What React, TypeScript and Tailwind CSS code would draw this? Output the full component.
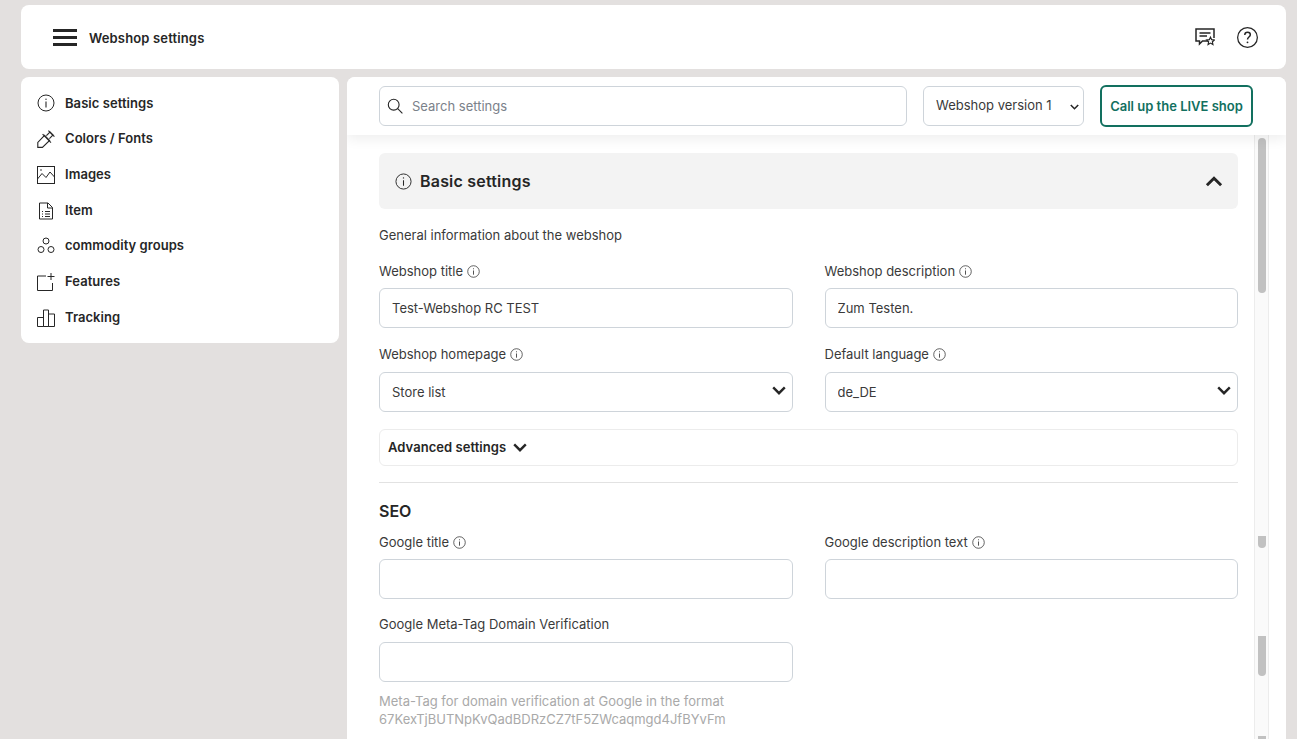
import React from 'react';

const ink = '#262626';

const InfoIcon = ({ className }: { className: string }) => (
  <svg viewBox="0 0 18 18" fill="none" stroke={ink} strokeWidth="1" className={className}>
    <circle cx="9" cy="9" r="8" />
    <path d="M9 7.6V13.4" strokeWidth="1.1" />
    <circle cx="9" cy="5.2" r="0.7" fill={ink} stroke="none" />
  </svg>
);

const PenIcon = () => (
  <svg viewBox="0 0 18 18" fill="none" stroke={ink} strokeWidth="1.1" className="w-[18px] h-[18px]">
    <path d="M7.6 5.4 12.6 10.4 5.4 17.4H0.8V12.4Z" />
    <path d="M5.6 4.2 14 12.6" />
    <path d="M9.4 5.6 13 2l3 3-3.6 3.6" />
    <path d="M11.4 0.6 17.4 6.6" />
  </svg>
);

const ImageIcon = () => (
  <svg viewBox="0 0 18 18" fill="none" stroke={ink} strokeWidth="1" className="w-[18px] h-[18px]">
    <rect x="0.5" y="0.5" width="17" height="17" />
    <path d="M0.5 13 5 7.5l4 4 4-5.5 4.5 5" />
    <circle cx="4" cy="4" r="0.8" fill={ink} stroke="none" />
  </svg>
);

const DocIcon = () => (
  <svg viewBox="0 0 18 18" fill="none" stroke={ink} strokeWidth="1" className="w-[18px] h-[18px]">
    <path d="M2.5 1h8.5l4.5 4.5V17h-13Z" />
    <path d="M10.5 1v5h5" />
    <path d="M8 9.5h5M8 12h5M8 14.5h5" />
    <path d="M5 9.5h1M5 12h1M5 14.5h1" />
  </svg>
);

const GroupsIcon = () => (
  <svg viewBox="0 0 18 18" fill="none" stroke={ink} strokeWidth="1" className="w-[18px] h-[18px]">
    <circle cx="9" cy="4" r="3" />
    <circle cx="4" cy="12.5" r="3" />
    <circle cx="14" cy="12.5" r="3" />
  </svg>
);

const FeatureIcon = () => (
  <svg viewBox="0 0 18 18" fill="none" stroke={ink} strokeWidth="1" className="w-[18px] h-[18px]">
    <path d="M9 3H0.5V17.5H15.5V10" />
    <path d="M14 0V7M10.5 3.5H17.5" />
  </svg>
);

const ChartIcon = () => (
  <svg viewBox="0 0 18 18" fill="none" stroke={ink} strokeWidth="1" className="w-[18px] h-[18px]">
    <path d="M0.5 17.5V8.5H6.5V17.5Z" />
    <path d="M6.5 17.5V1H11.5V17.5Z" />
    <path d="M11.5 17.5V5H17.5V17.5Z" />
  </svg>
);

const ChatStarIcon = () => (
  <svg viewBox="0 0 20 18" fill="none" stroke={ink} className="w-[20px] h-[18px]">
    <path d="M13 13H7.5L4.5 16V13H1V1H19V10" strokeWidth="1.5" />
    <path d="M4.5 5H15.5M4.5 8H12" strokeWidth="1.4" />
    <path d="M15.5 9.2l1.2 2.5 2.6.3-1.9 1.8.5 2.7-2.4-1.4-2.4 1.4.5-2.7-1.9-1.8 2.6-.3Z" strokeWidth="1.2" fill="#fff" />
  </svg>
);

const HelpIcon = () => (
  <svg viewBox="0 0 20 20" fill="none" stroke={ink} strokeWidth="1.2" className="w-[21px] h-[21px]">
    <circle cx="10" cy="10" r="9.4" />
    <path d="M7.4 7.6c0-1.5 1.1-2.6 2.7-2.6s2.6 1 2.6 2.3c0 2.2-2.7 2.3-2.7 4.6" strokeWidth="1.4" />
    <circle cx="10" cy="14.6" r="0.9" fill={ink} stroke="none" />
  </svg>
);

const SearchIcon = () => (
  <svg viewBox="0 0 16 16" fill="none" stroke={ink} strokeWidth="1.1" className="w-[16px] h-[16px]">
    <circle cx="6.7" cy="6.7" r="5.4" />
    <path d="M10.7 10.7 15.4 15.4" />
  </svg>
);

const Chevron = ({ up, className }: { up?: boolean; className: string }) => (
  <svg viewBox="0 0 14 9" fill="none" stroke={ink} strokeWidth="2.4" className={className}>
    <path d={up ? 'M1.2 7.6 7 1.8l5.8 5.8' : 'M1.2 1.4 7 7.2l5.8-5.8'} />
  </svg>
);

const navItems = [
  { label: 'Basic settings', icon: <InfoIcon className="w-[18px] h-[18px]" /> },
  { label: 'Colors / Fonts', icon: <PenIcon /> },
  { label: 'Images', icon: <ImageIcon /> },
  { label: 'Item', icon: <DocIcon /> },
  { label: 'commodity groups', icon: <GroupsIcon /> },
  { label: 'Features', icon: <FeatureIcon /> },
  { label: 'Tracking', icon: <ChartIcon /> },
];

const Label = ({ text, info = true }: { text: string; info?: boolean }) => (
  <label className="flex items-center gap-[4px] h-[17px] mb-[8px] text-[13px] leading-[17px] text-[#3a3a3a]">
    {text}
    {info && <InfoIcon className="w-[13px] h-[13px]" />}
  </label>
);

const TextField = ({ value = '' }: { value?: string }) => (
  <input
    readOnly
    value={value}
    className="w-full h-[40px] px-[12px] bg-white border border-[#ced4da] rounded-[6px] text-[13px] text-[#3a3a3a] outline-none"
  />
);

const SelectField = ({ value }: { value: string }) => (
  <div className="relative mt-[9px]">
    <select
      defaultValue={value}
      className="w-full h-[40px] px-[12px] pt-[1px] bg-white border border-[#ced4da] rounded-[6px] text-[13px] text-[#3a3a3a] outline-none appearance-none"
    >
      <option>{value}</option>
    </select>
    <Chevron className="absolute right-[7px] top-[14px] w-[14px] h-[9px] pointer-events-none" />
  </div>
);

const Scrollbar = () => (
  <div className="w-[15px] shrink-0 flex flex-col items-center bg-[#fafafa] border-x border-[#ececec]">
    <div className="w-[8px] h-[155px] mt-[3px] bg-[#c1c1c1] rounded-full shrink-0" />
    <div className="w-[8px] h-[12px] mt-[243px] bg-[#c1c1c1] rounded-b-full shrink-0" />
    <div className="w-[8px] h-[40px] mt-[88px] bg-[#c1c1c1] rounded-b-full shrink-0" />
    <div className="w-[8px] h-[10px] mt-[60px] bg-[#c1c1c1] shrink-0" />
  </div>
);

export default function App() {
  return (
    <div
      className="h-screen overflow-hidden bg-[#e3e0df] pt-[5px] pl-[21px] pr-[11px] flex flex-col gap-[8px] text-[#262626]"
      style={{ fontFamily: 'Inter, sans-serif' }}
    >
      <header className="h-[64px] shrink-0 bg-white rounded-[8px] flex items-center justify-between pl-[32px] pr-[28px]">
        <div className="flex items-center gap-[12px]">
          <div className="w-[24px] flex flex-col gap-[4px]">
            <span className="h-[3px] bg-[#262626]" />
            <span className="h-[3px] bg-[#262626]" />
            <span className="h-[3px] bg-[#262626]" />
          </div>
          <span className="mt-[3px] text-[13px] font-semibold tracking-[0.15px]">Webshop settings</span>
        </div>
        <div className="flex items-center gap-[22px]">
          <ChatStarIcon />
          <HelpIcon />
        </div>
      </header>

      <div className="flex-1 min-h-0 flex gap-[8px]">
        <nav className="w-[318px] h-[266px] shrink-0 bg-white rounded-[8px] pl-[16px] pt-[8.6px]">
          {navItems.map((item) => (
            <div key={item.label} className="h-[35.7px] flex items-center gap-[10px]">
              <span className="w-[18px] h-[18px] shrink-0">{item.icon}</span>
              <span className="text-[13px] font-semibold tracking-[0.05px]">{item.label}</span>
            </div>
          ))}
        </nav>

        <main className="flex-1 min-w-0 bg-white rounded-t-[8px] flex flex-col overflow-hidden">
          <div className="relative z-10 h-[58px] shrink-0 bg-white shadow-[0_4px_12px_rgba(0,0,0,0.07)] flex items-center pl-[32px] pr-[33px] pb-[1px] gap-[16px]">
            <div className="relative flex-1">
              <span className="absolute left-[8px] top-[12px]"><SearchIcon /></span>
              <input
                placeholder="Search settings"
                className="w-full h-[40px] pl-[32px] pr-[12px] border border-[#ced4da] rounded-[6px] text-[13px] outline-none placeholder:text-[#7b818a]"
              />
            </div>
            <div className="relative w-[161px]">
              <select className="w-full h-[40px] px-[12px] pt-[1px] bg-white border border-[#ced4da] rounded-[6px] text-[13px] text-[#3a3a3a] outline-none appearance-none">
                <option>Webshop version 1</option>
              </select>
              <Chevron className="absolute right-[5px] top-[18px] w-[9px] h-[6px] pointer-events-none" />
            </div>
            <button className="w-[153px] h-[42px] pt-[2px] border-2 border-[#12705f] rounded-[6px] text-[13px] font-semibold text-[#12705f] whitespace-nowrap">
              Call up the LIVE shop
            </button>
          </div>

          <div className="flex-1 min-h-0 flex pr-[17px] overflow-hidden">
            <div className="w-[907px] shrink-0 pl-[32px] pr-[16px] pt-[18px]">
              <div className="h-[56px] bg-[#f3f3f3] rounded-[6px] flex items-center justify-between pl-[16px] pr-[15px]">
                <div className="flex items-center gap-[8px]">
                  <InfoIcon className="w-[17px] h-[17px]" />
                  <h2 className="text-[16px] font-semibold tracking-[0.2px]">Basic settings</h2>
                </div>
                <Chevron up className="w-[18px] h-[11px]" />
              </div>

              <p className="mt-[18px] h-[17px] text-[13px] leading-[17px] text-[#3a3a3a]">General information about the webshop</p>

              <div className="grid grid-cols-2 gap-x-[32px] gap-y-[18px] mt-[19px]">
                <div>
                  <Label text="Webshop title" />
                  <TextField value="Test-Webshop RC TEST" />
                </div>
                <div>
                  <Label text="Webshop description" />
                  <TextField value="Zum Testen." />
                </div>
                <div>
                  <label className="flex items-center gap-[4px] h-[17px] text-[13px] leading-[17px] text-[#3a3a3a]">
                    Webshop homepage
                    <InfoIcon className="w-[13px] h-[13px]" />
                  </label>
                  <SelectField value="Store list" />
                </div>
                <div>
                  <label className="flex items-center gap-[4px] h-[17px] text-[13px] leading-[17px] text-[#3a3a3a]">
                    Default language
                    <InfoIcon className="w-[13px] h-[13px]" />
                  </label>
                  <SelectField value="de_DE" />
                </div>
              </div>

              <div className="mt-[17px] h-[37px] border border-[#ececec] rounded-[6px] flex items-center gap-[7px] px-[8px]">
                <span className="text-[13px] font-semibold tracking-[0.05px]">Advanced settings</span>
                <Chevron className="w-[14px] h-[9px]" />
              </div>

              <hr className="mt-[16px] border-t border-[#e2e2e2]" />

              <h3 className="mt-[18px] h-[20px] text-[16px] leading-[20px] font-semibold">SEO</h3>

              <div className="grid grid-cols-2 gap-x-[32px] gap-y-[17px] mt-[13px]">
                <div>
                  <Label text="Google title" />
                  <TextField />
                </div>
                <div>
                  <Label text="Google description text" />
                  <TextField />
                </div>
                <div>
                  <Label text="Google Meta-Tag Domain Verification" info={false} />
                  <div className="mt-[9px]">
                    <TextField />
                  </div>
                  <p className="mt-[10px] text-[13px] leading-[18px] text-[#a9a9a9]">
                    Meta-Tag for domain verification at Google in the format 67KexTjBUTNpKvQadBDRzCZ7tF5ZWcaqmgd4JfBYvFm
                  </p>
                </div>
              </div>
            </div>
            <Scrollbar />
          </div>
        </main>
      </div>
    </div>
  );
}
